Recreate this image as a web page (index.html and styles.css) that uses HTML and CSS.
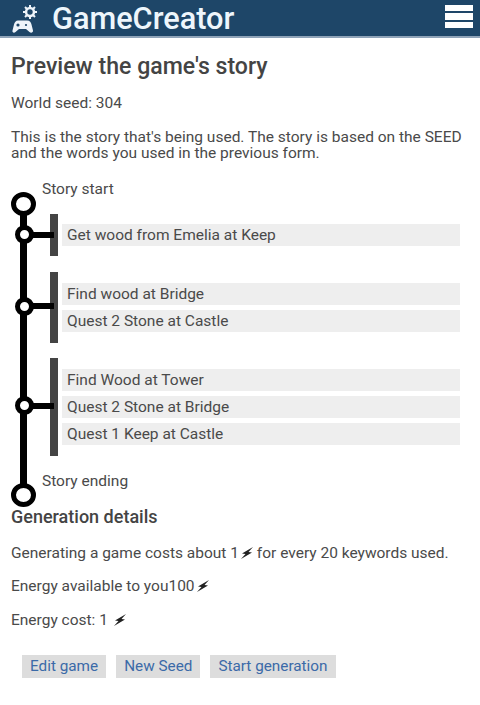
FILE: index.html
```html
<!DOCTYPE html>
<html lang="en">
<head>
<meta charset="utf-8">
<title>GameCreator</title>
<link rel="stylesheet" href="styles.css">
</head>
<body>
<header class="topbar">
  <div class="brand">
    <svg class="logo" viewBox="0 0 28 30" aria-hidden="true">
      <path class="logo-teeth" d="M19 1v14M12 8h14M14 3l10 10M24 3L14 13"/>
      <circle class="logo-gear" cx="19" cy="8" r="5.200"/>
      <circle class="logo-center" cx="19" cy="8" r="2.700"/>
      <path class="logo-fill" d="M7 16.500h9c3 0 4 2 4.500 4l1.500 6c.3 2-2 3-3.500 1.500L15 25H8l-3.500 3C3 29.500 1 28.500 1.500 26.500L3 20.500c.5-2 2-4 4-4z"/>
      <circle class="logo-hole" cx="7" cy="21" r="1.600"/>
      <circle class="logo-hole" cx="15" cy="21" r="1.100"/>
    </svg>
    <span class="brand-name">GameCreator</span>
  </div>
  <div class="burger" aria-label="Menu"><span></span><span></span><span></span></div>
</header>
<main class="page">
  <h1 class="title">Preview the game's story</h1>
  <p class="seed">World seed: 304</p>
  <p class="intro">This is the story that's being used. The story is based on the SEED and the words you used in the previous form.</p>

  <section class="story">
    <div class="spine"></div>
    <div class="endpoint endpoint-start"><span class="ring"></span><span class="endpoint-label">Story start</span></div>

    <div class="stage stage-one">
      <span class="node"></span><span class="link"></span>
      <div class="quests"><div class="quest">Get wood from Emelia at Keep</div></div>
    </div>
    <div class="stage stage-two">
      <span class="node"></span><span class="link"></span>
      <div class="quests">
        <div class="quest">Find wood at Bridge</div>
        <div class="quest">Quest 2 Stone at Castle</div>
      </div>
    </div>
    <div class="stage stage-three">
      <span class="node"></span><span class="link"></span>
      <div class="quests">
        <div class="quest">Find Wood at Tower</div>
        <div class="quest">Quest 2 Stone at Bridge</div>
        <div class="quest">Quest 1 Keep at Castle</div>
      </div>
    </div>

    <div class="endpoint endpoint-end"><span class="ring"></span><span class="endpoint-label">Story ending</span></div>
  </section>

  <h2 class="subtitle">Generation details</h2>
  <p class="detail">Generating a game costs about 1<svg class="bolt" viewBox="0 0 12 12" aria-hidden="true"><path d="M12 0L1 6.500l3.500.5L0 12l11-6.500L7.500 5z"/></svg> for every 20 keywords used.</p>
  <p class="detail">Energy available to you100<svg class="bolt" viewBox="0 0 12 12" aria-hidden="true"><path d="M12 0L1 6.500l3.500.5L0 12l11-6.500L7.500 5z"/></svg></p>
  <p class="detail">Energy cost: 1 <svg class="bolt" viewBox="0 0 12 12" aria-hidden="true"><path d="M12 0L1 6.500l3.500.5L0 12l11-6.500L7.500 5z"/></svg></p>

  <div class="actions">
    <a class="btn" href="#">Edit game</a>
    <a class="btn" href="#">New Seed</a>
    <a class="btn" href="#">Start generation</a>
  </div>
</main>
</body>
</html>
```

FILE: styles.css
```css
* { box-sizing: border-box; }
html, body { margin: 0; padding: 0; }
body {
  width: 480px;
  height: 705px;
  overflow: hidden;
  background: #fff;
  color: #4a4a4a;
  font-family: Roboto, "Liberation Sans", sans-serif;
  font-size: 15.5px;
  line-height: 17px;
}
.topbar {
  height: 38px;
  background: #1e4668;
  border-bottom: 2px solid #8fa3b8;
  display: flex;
  justify-content: space-between;
  padding: 0 7px 0 11px;
}
.brand { display: flex; align-items: center; gap: 13px; }
.logo { width: 28px; height: 30px; margin-top: 2px; }
.logo-fill, .logo-gear { fill: #eef4fa; }
.logo-hole { fill: #1e4668; }
.logo-teeth { stroke: #eef4fa; stroke-width: 2; fill: none; }
.logo-center { fill: #1e4668; }
.brand-name {
  color: #eef6fc;
  font-size: 30.700px;
  font-weight: 500;
  line-height: 37px;
}
.burger {
  width: 28px;
  height: 23px;
  margin-top: 5px;
  display: flex;
  flex-direction: column;
  gap: 2px;
}
.burger span { display: block; height: 6.330px; background: #fff; }
.page { padding: 0 11px; }
.title {
  margin: 15px 0 0;
  font-size: 23.100px;
  line-height: 27px;
  font-weight: 500;
  color: #444;
}
.seed { margin: 15px 0 0; }
.intro { margin: 18px 0 0; line-height: 15.500px; }
.story { position: relative; margin: 15px -11px 0; height: 331px; }
.spine {
  position: absolute;
  left: 20px;
  top: 24px;
  width: 7px;
  height: 286px;
  background: #000;
}
.endpoint { position: absolute; left: 11px; height: 24px; width: 200px; }
.endpoint-start { top: 16px; }
.endpoint-end { top: 307px; }
.ring {
  position: absolute;
  left: 0;
  top: 0;
  width: 25px;
  height: 24px;
  background: #fff;
  border: 5.500px solid #000;
  border-radius: 50%;
}
.endpoint-label { position: absolute; left: 31px; top: -10.500px; white-space: nowrap; }
.endpoint-start .endpoint-label { top: -11.500px; }
.stage {
  position: absolute;
  left: 50px;
  width: 410px;
  border-left: 8px solid #444;
  display: flex;
  align-items: center;
}
.stage-one { top: 38px; height: 42px; }
.stage-two { top: 96px; height: 71px; }
.stage-three { top: 182px; height: 98px; }
.quests { flex: 1; margin-left: 4px; display: flex; flex-direction: column; gap: 5px; }
.quest {
  height: 22px;
  line-height: 23px;
  padding-left: 5px;
  background: #eee;
}
.node {
  position: absolute;
  left: -43.500px;
  top: 50%;
  width: 19px;
  height: 19px;
  margin-top: -10px;
  background: #fff;
  border: 5px solid #000;
  border-radius: 50%;
  z-index: 1;
}
.stage-two .node, .stage-three .node { margin-top: -11px; }
.link {
  position: absolute;
  left: -26px;
  top: 50%;
  width: 22px;
  height: 6px;
  margin-top: -3.500px;
  background: #000;
}
.stage-two .link, .stage-three .link { margin-top: -4.500px; }
.subtitle {
  margin: 0;
  font-size: 18px;
  line-height: 20px;
  font-weight: 500;
  color: #444;
}
.detail { margin: 16.500px 0 0; }
.subtitle + .detail { margin-top: 17.500px; }
.bolt { width: 12px; height: 12px; margin: 0 0 -1px 2px; fill: #222; }
.actions { display: flex; gap: 10px; margin: 26.500px 0 0 11px; }
.btn {
  display: block;
  height: 23px;
  line-height: 22px;
  padding: 0 8px;
  background: #ddd;
  color: #3b6aa8;
  font-size: 15.300px;
  text-decoration: none;
}
```
